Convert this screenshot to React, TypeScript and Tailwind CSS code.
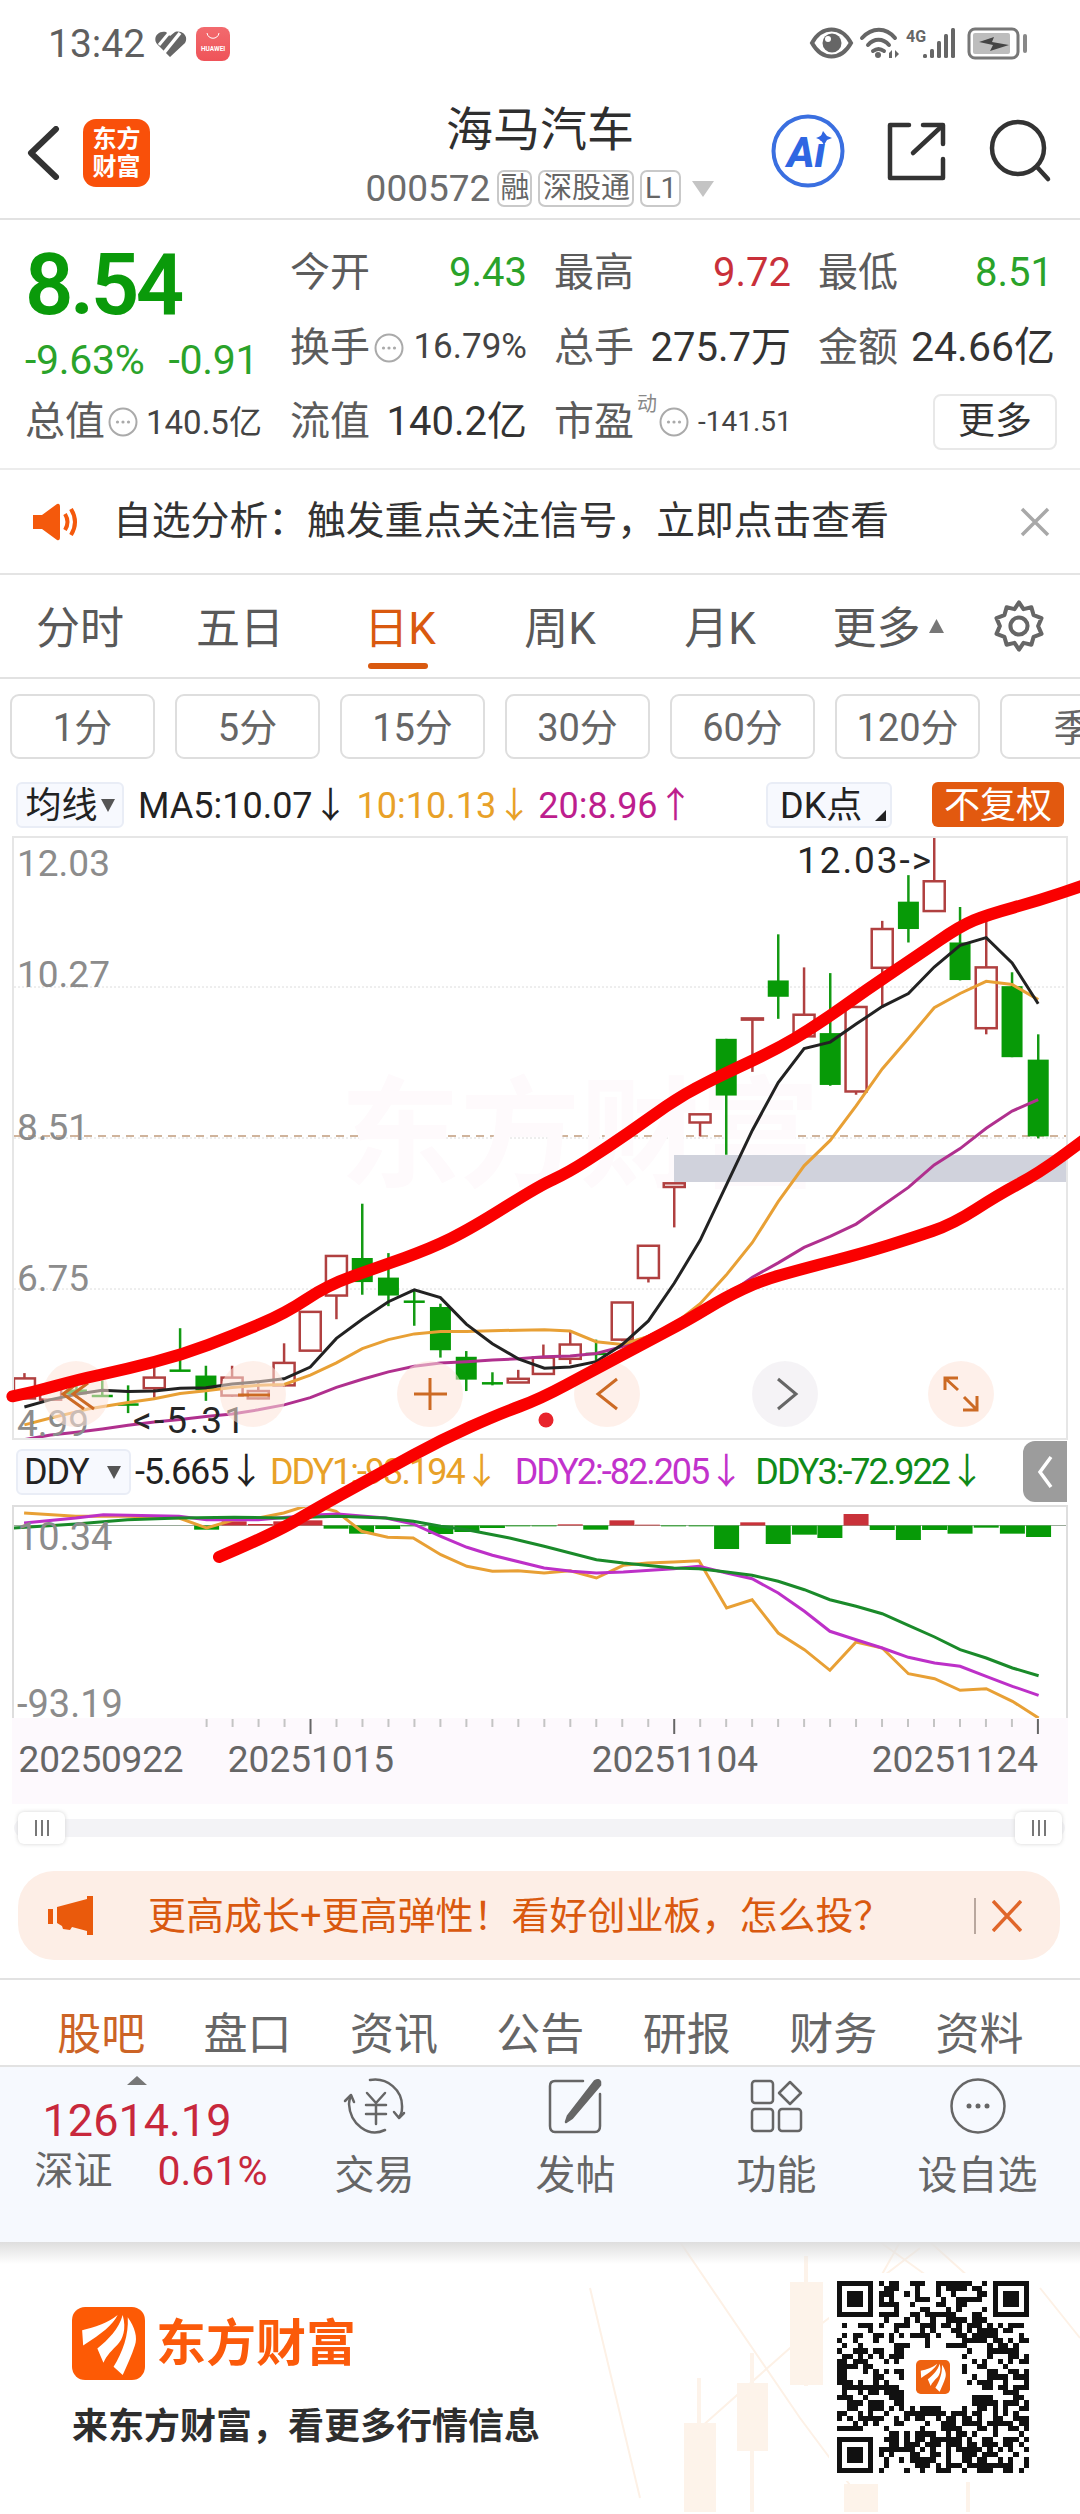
import React from "react";

type P = [number, number];
const z3 = (x: number, y: number): P => [x / 2.904, 820 + y / 2.45];
const z5 = (x: number, y: number): P => [x / 1.452, 1440 + y / 3];
const line = (p: P[]) => p.map((q) => `${q[0].toFixed(1)},${q[1].toFixed(1)}`).join(" ");
const smooth = (p: P[]) => {
  let d = `M${p[0][0].toFixed(1)} ${p[0][1].toFixed(1)}`;
  for (let i = 1; i < p.length - 1; i++) {
    const mx = (p[i][0] + p[i + 1][0]) / 2;
    const my = (p[i][1] + p[i + 1][1]) / 2;
    d += ` Q${p[i][0].toFixed(1)} ${p[i][1].toFixed(1)} ${mx.toFixed(1)} ${my.toFixed(1)}`;
  }
  const l = p[p.length - 1];
  return d + ` L${l[0].toFixed(1)} ${l[1].toFixed(1)}`;
};
const O = 1568;
// x, bodyTop, bodyBottom, wickTop, wickBottom, colour
const candles: [number, number, number, number, number, "r" | "g"][] = [
  [71, 1373, 1422, 1360, 1422, "r"], [147, 1395, 1425, 1385, 1428, "r"], [222, 1400, 1412, 1390, 1420, "g"],
  [297, 1413, 1416, 1378, 1416, "g"], [372, 1434, 1437, 1390, 1458, "g"], [448, 1371, 1397, 1345, 1420, "r"],
  [523, 1351, 1353, 1250, 1353, "g"], [598, 1366, 1402, 1342, 1428, "g"], [674, 1371, 1415, 1342, 1418, "r"],
  [750, 1404, 1422, 1385, 1424, "r"], [825, 1335, 1390, 1287, 1394, "r"], [901, 1210, 1305, 1210, 1305, "r"],
  [977, 1073, 1170, 1073, 1228, "r"], [1052, 1078, 1137, 945, 1168, "g"], [1128, 1126, 1170, 1066, 1196, "g"],
  [1203, 1182, 1185, 1155, 1244, "g"], [1279, 1198, 1304, 1190, 1322, "g"], [1354, 1320, 1376, 1306, 1404, "g"],
  [1430, 1382, 1385, 1358, 1390, "g"], [1505, 1374, 1383, 1352, 1383, "r"], [O + 10, 1322, 1362, 1290, 1362, "r"],
  [O + 88, 1290, 1325, 1255, 1338, "r"], [O + 163, 1310, 1312, 1278, 1330, "g"], [O + 239, 1187, 1278, 1187, 1282, "r"],
  [O + 315, 1048, 1127, 1048, 1138, "r"], [O + 390, 895, 904, 895, 1003, "r"], [O + 465, 726, 746, 726, 780, "r"],
  [O + 541, 541, 680, 541, 825, "g"], [O + 617, 491, 494, 491, 622, "r"], [O + 692, 398, 438, 285, 492, "g"],
  [O + 767, 482, 535, 366, 535, "r"], [O + 843, 527, 654, 380, 656, "g"], [O + 918, 463, 670, 463, 678, "r"],
  [O + 994, 272, 367, 252, 465, "r"], [O + 1070, 205, 272, 140, 305, "g"], [O + 1145, 155, 228, 45, 228, "r"],
  [O + 1220, 305, 397, 218, 398, "g"], [O + 1296, 366, 515, 240, 530, "r"], [O + 1371, 412, 586, 378, 586, "g"],
  [O + 1447, 592, 780, 530, 785, "g"],
];
const raw = (a: number[]) => {
  const out: P[] = [];
  for (let i = 0; i < a.length; i += 2) out.push(z3(a[i], a[i + 1]));
  return out;
};
const ma5 = raw([71,1443,147,1425,222,1412,297,1402,372,1405,448,1404,523,1397,598,1396,674,1387,750,1381,825,1374,901,1345,977,1275,1052,1228,1128,1185,1203,1156,1279,1175,1354,1240,1430,1288,1505,1325,1581,1348,O+88,1345,O+163,1332,O+239,1290,O+315,1232,O+390,1140,O+465,1035,O+541,900,O+617,765,O+692,648,O+767,565,O+843,549,O+918,505,O+994,462,O+1070,430,O+1145,365,O+1220,312,O+1296,293,O+1371,355,O+1447,455]);
const ma10 = raw([71,1487,147,1470,222,1455,255,1448,372,1432,448,1423,523,1410,598,1403,674,1395,750,1390,825,1388,901,1365,977,1335,1052,1300,1128,1278,1203,1264,1279,1258,1354,1258,1430,1256,1505,1255,1581,1254,O+88,1257,O+163,1283,O+239,1290,O+315,1270,O+390,1240,O+465,1190,O+541,1120,O+617,1040,O+692,940,O+767,852,O+843,790,O+918,705,O+994,615,O+1070,540,O+1145,465,O+1220,430,O+1296,400,O+1371,408,O+1447,445]);
const ma20 = raw([71,1523,147,1512,222,1505,297,1497,372,1488,448,1480,523,1474,598,1466,674,1460,750,1450,825,1438,901,1420,977,1395,1052,1375,1128,1357,1203,1343,1279,1335,1354,1332,1430,1328,1505,1325,1581,1320,O+88,1318,O+163,1312,O+239,1295,O+315,1270,O+390,1240,O+465,1205,O+541,1170,O+617,1125,O+692,1090,O+767,1052,O+843,1025,O+918,995,O+994,950,O+1070,905,O+1145,850,O+1220,810,O+1296,760,O+1371,718,O+1447,690]);
const red1 = raw([36,1412,100,1402,220,1372,370,1345,530,1310,680,1262,830,1208,950,1140,1100,1095,1250,1050,1370,1000,O,895,O+80,865,O+200,800,O+310,735,O+420,670,O+540,620,O+680,565,O+800,505,O+950,415,O+1100,330,O+1220,260,O+1300,232,O+1450,197,O+1580,160]);
const red2: P[] = [[219,1557],[275,1533],[317,1508],[386,1470],[441,1440],[499,1414],[540,1399],[592,1371],[643,1344],[688,1320],[726,1297],[760,1281],[802,1269],[864,1253],[912,1238],[953,1224],[998,1195],[1039,1173],[1084,1140]];

const zz = (a: number[]) => {
  const out: P[] = [];
  for (let i = 0; i < a.length; i += 2) out.push(z5(a[i], a[i + 1]));
  return out;
};
const ddy1 = zz([35,225,110,235,185,235,260,240,300,270,340,245,375,240,412,225,450,200,488,220,525,280,563,298,600,300,640,350,678,385,715,400,752,398,790,405,828,398,866,420,905,382,940,375,978,372,1015,368,1055,510,1092,485,1130,585,1168,635,1205,697,1243,612,1281,630,1319,707,1357,722,1394,757,1432,752,1470,790,1508,840]);
const ddy2 = zz([35,255,110,240,150,230,260,235,300,245,375,245,450,232,490,228,560,240,600,258,640,295,678,328,715,352,790,390,830,400,866,405,905,402,978,392,1015,385,1055,405,1092,422,1130,465,1168,520,1205,580,1243,605,1281,630,1319,658,1357,675,1394,685,1432,715,1470,745,1508,772]);
const ddy3 = zz([20,270,110,258,185,245,260,240,340,238,412,240,490,235,560,240,600,250,640,265,678,275,740,300,790,325,866,365,905,375,978,390,1015,392,1055,402,1092,412,1130,430,1168,455,1205,485,1243,505,1281,527,1319,562,1357,597,1394,635,1432,660,1470,690,1508,713]);
const bars: [number, number][] = [[300,275],[340,250],[378,258],[415,250],[450,247],[488,272],[525,287],[563,273],[600,265],[640,288],[678,282],[715,270],[752,265],[790,265],[828,259],[865,275],[903,247],[940,260],[978,265],[1018,265],[1055,333],[1093,253],[1130,318],[1168,290],[1205,300],[1243,228],[1281,276],[1319,306],[1357,276],[1394,287],[1432,269],[1470,287],[1508,297]];

const qrPath = (() => {
  const n = 37;
  let seed = 20251124;
  const rnd = () => {
    seed = (seed * 1664525 + 1013904223) >>> 0;
    return (seed >>> 16) / 65536;
  };
  let d = "";
  const inFinder = (x: number, y: number) => (x < 8 && y < 8) || (x >= n - 8 && y < 8) || (x < 8 && y >= n - 8);
  const finder = (ox: number, oy: number) => {
    d += `M${ox} ${oy}h7v1h-7zM${ox} ${oy + 6}h7v1h-7zM${ox} ${oy + 1}h1v5h-1zM${ox + 6} ${oy + 1}h1v5h-1zM${ox + 2} ${oy + 2}h3v3h-3z`;
  };
  finder(0, 0);
  finder(n - 7, 0);
  finder(0, n - 7);
  for (let y = 0; y < n; y++)
    for (let x = 0; x < n; x++) {
      if (inFinder(x, y)) continue;
      if (x >= 13 && x <= 23 && y >= 13 && y <= 23) continue;
      if (rnd() > 0.48) d += `M${x} ${y}h1v1h-1z`;
    }
  return d;
})();

const Feather = ({ fill = "#fff" }: { fill?: string }) => (
  <g fill={fill}>
    <path d="M10 23 C22 20 36 16 45 8 C40 18 30 26 11 38 Z" />
    <path d="M25 41 C36 32 46 22 50 8 C54 22 50 32 45 37 C40 42 34 48 31 55 Z" />
    <path d="M41 59 C50 44 56 28 55 10 C62 20 65 30 62 38 C59 48 54 58 50 67 Z" />
  </g>
);

const Dots = () => (
  <svg width="30" height="30" viewBox="0 0 30 30" className="shrink-0">
    <circle cx="15" cy="15" r="13.5" fill="none" stroke="#aaa" strokeWidth="2" />
    <circle cx="9.5" cy="15" r="1.6" fill="#aaa" />
    <circle cx="15" cy="15" r="1.6" fill="#aaa" />
    <circle cx="20.5" cy="15" r="1.6" fill="#aaa" />
  </svg>
);

const Label = ({ c }: { c: string }) => <span className="shrink-0 whitespace-nowrap text-[40px] leading-none text-[#5c5c5c]">{c}</span>;

const Tag = ({ c, w }: { c: string; w: string }) => (
  <span className={`flex h-[37px] items-center justify-center rounded-[7px] border-2 border-[#c9c9c9] text-[29px] leading-none text-[#666] ${w}`}>{c}</span>
);

function Status() {
  return (
    <div className="flex h-[88px] items-center pl-[48px] pr-[49px]">
      <span className="text-[39px] leading-none text-[#5f5f5f]">13:42</span>
      <svg width="34" height="30" viewBox="155 28 34 30" className="ml-[9px]">
        <path d="M171 56 L158 43 C153 36 160 29 167 31 L171 35 L176 31 C183 29 190 35 186 42 Z" fill="#666" />
        <path d="M181 32 L164 53" stroke="#fff" strokeWidth="3.5" />
        <path d="M170 32 L160 44" stroke="#fff" strokeWidth="3" />
      </svg>
      <span className="relative ml-[8px] flex h-[34px] w-[34px] flex-col items-center justify-end rounded-[8px] bg-gradient-to-b from-[#f26a6e] to-[#ef5359] pb-[9px]">
        <svg width="14" height="7" viewBox="0 0 14 7" className="absolute top-[6px]" fill="none" stroke="#fff" strokeWidth="1">
          <path d="M1 0 C2 7 12 7 13 0" />
        </svg>
        <span className="text-[6.5px] font-bold leading-none text-white">HUAWEI</span>
      </span>
      <svg width="225" height="40" viewBox="810 23 225 40" className="ml-auto">
        <path d="M816 42 C826 24 845 24 855 42 C845 60 826 60 816 42 Z" fill="none" stroke="#666" strokeWidth="4" />
        <circle cx="836" cy="42" r="9.5" fill="#666" />
        <circle cx="832" cy="38" r="3" fill="#fff" />
        <g fill="none" stroke="#666" strokeWidth="4" strokeLinecap="round">
          <path d="M866 37 C876 26 890 26 899 37" />
          <path d="M872 44 C878 37 887 37 893 44" />
          <path d="M877 50 C881 47 884 47 888 50" />
        </g>
        <circle cx="882" cy="54" r="3" fill="#666" />
        <path d="M893 52 L896 49 V57 H893 Z M899 49 L903 53 L899 57 Z" fill="#666" />
        <text x="910" y="41" fontSize="16" fontWeight="700" fill="#666" className="font-[Roboto,sans-serif]">4G</text>
        <rect x="927" y="53" width="4" height="4" rx="1.5" fill="#666" />
        <rect x="934" y="48" width="4" height="9" rx="1.5" fill="#666" />
        <rect x="941" y="40" width="4" height="17" rx="1.5" fill="#666" />
        <rect x="948" y="33" width="4" height="24" rx="1.5" fill="#666" />
        <rect x="955" y="27" width="4" height="30" rx="1.5" fill="#666" />
        <rect x="973" y="28" width="49" height="29" rx="6" fill="none" stroke="#777" strokeWidth="3" />
        <rect x="977" y="32" width="37" height="21" rx="2" fill="#bdbdbd" />
        <path d="M983 41 L998 36 L996 41 L1013 44 L994 50 L997 44 Z" fill="#444" />
        <rect x="1027" y="33" width="4" height="19" rx="2" fill="#888" />
      </svg>
    </div>
  );
}

function Header() {
  return (
    <div className="flex h-[132px] items-center border-b-2 border-[#e2e2e2]">
      <div className="flex w-[270px] items-center pl-[27px]">
        <svg width="33" height="54" viewBox="0 0 33 54" fill="none" stroke="#333" strokeWidth="6" strokeLinecap="round" strokeLinejoin="round">
          <path d="M29 3 L4 27 L29 51" />
        </svg>
        <span className="ml-[23px] flex h-[68px] w-[67px] flex-col items-center justify-center rounded-[13px] bg-[#f9500a] text-[24px] font-bold leading-[28px] text-white">
          <span>东方</span>
          <span>财富</span>
        </span>
      </div>
      <div className="flex flex-1 flex-col items-center pt-[3px]">
        <span className="text-[47px] leading-[56px] text-[#2f2f2f]">海马汽车</span>
        <div className="mt-[12px] flex items-center gap-[6px]">
          <span className="mr-[1px] text-[37px] leading-none text-[#6c6c6c]">000572</span>
          <Tag c="融" w="w-[35px]" />
          <Tag c="深股通" w="w-[96px]" />
          <Tag c="L1" w="w-[41px]" />
          <svg width="22" height="16" viewBox="0 0 22 16" className="ml-[5px]"><path d="M0 0 H22 L11 16 Z" fill="#c4c4c4" /></svg>
        </div>
      </div>
      <div className="w-[270px]">
        <svg width="290" height="76" viewBox="770 114 290 76" className="-ml-[40px] mb-[4px] block">
          <circle cx="808" cy="152" r="34.5" fill="none" stroke="#3a6fe0" strokeWidth="4" />
          <text x="787" y="168" fontSize="42" fontWeight="800" fontStyle="italic" fill="#2f66e2">Ai</text>
          <path d="M823 132 L827 137 L832 139 L827 141 L824 146 L821 141 L816 139 L821 137 Z" fill="#2f66e2" />
          <g fill="none" stroke="#333" strokeWidth="4.5" strokeLinecap="round" strokeLinejoin="round">
            <path d="M909 126 H890 V179 H943 V160" />
            <path d="M923 126 H943 V145" />
            <path d="M913 154 L942 127" />
            <circle cx="1018" cy="149" r="26" />
            <path d="M1037 168 L1048 180" />
          </g>
        </svg>
      </div>
    </div>
  );
}

function Cell({ children }: { children: React.ReactNode }) {
  return <div className="flex items-center justify-between">{children}</div>;
}

function Stats() {
  return (
    <div className="flex h-[250px] border-b-2 border-[#ececec]">
      <div className="flex w-[290px] flex-col pl-[25px]">
        <span className="mt-[26px] h-[78px] text-[85px] font-semibold leading-[78px] tracking-[-3.5px] text-[#0a9a0a]">8.54</span>
        <div className="mt-[16px] flex gap-[24px] text-[41px] leading-[40px] tracking-[-0.3px] text-[#2aa32a]">
          <span>-9.63%</span>
          <span>-0.91</span>
        </div>
        <div className="mt-[22px] flex items-center">
          <Label c="总值" />
          <span className="ml-[3px]"><Dots /></span>
          <span className="ml-[8px] text-[33px] leading-none text-[#444]">140.5亿</span>
        </div>
      </div>
      <div className="grid w-[763px] grid-cols-[237px_237px_235px] grid-rows-[74px_75px_74px] gap-x-[27px] pt-[16px]">
        <Cell><Label c="今开" /><span className="text-[40px] text-[#2aa32a]">9.43</span></Cell>
        <Cell><Label c="最高" /><span className="text-[40px] text-[#c9303a]">9.72</span></Cell>
        <Cell><Label c="最低" /><span className="text-[40px] text-[#2aa32a]">8.51</span></Cell>
        <Cell>
          <span className="flex items-center"><Label c="换手" /><span className="ml-[4px]"><Dots /></span></span>
          <span className="text-[35px] text-[#444]">16.79%</span>
        </Cell>
        <Cell><Label c="总手" /><span className="text-[40px] text-[#333]">275.7万</span></Cell>
        <Cell><Label c="金额" /><span className="-mr-[2px] text-[41px] text-[#333]">24.66亿</span></Cell>
        <Cell><Label c="流值" /><span className="text-[40px] text-[#333]">140.2亿</span></Cell>
        <div className="flex items-center">
          <Label c="市盈" />
          <span className="relative -top-[18px] ml-[3px] shrink-0 text-[20px] leading-none text-[#888]">动</span>
          <span className="ml-[2px]"><Dots /></span>
          <span className="ml-[9px] whitespace-nowrap text-[28px] leading-none text-[#444]">-141.51</span>
        </div>
        <div className="-mr-[4px] flex items-center justify-end">
          <span className="flex h-[56px] w-[124px] items-center justify-center rounded-[8px] border-2 border-[#e8e8e8] text-[37px] text-[#333]">更多</span>
        </div>
      </div>
    </div>
  );
}

function Notice() {
  return (
    <div className="flex h-[105px] items-center border-b-2 border-[#e4e4e4] pl-[33px] pr-[30px]">
      <svg width="46" height="38" viewBox="0 0 46 38">
        <path d="M0 12 H9 L24 1 Q27 0 27 4 V34 Q27 38 24 37 L9 26 H0 Z" fill="#f4590c" />
        <path d="M32 11 Q37 19 32 27 M38 6 Q46 19 38 32" fill="none" stroke="#f4590c" strokeWidth="4" />
      </svg>
      <span className="ml-[34px] text-[38.8px] leading-none text-[#333]">{"自选分析\uFF1A触发重点关注信号\uFF0C立即点击查看"}</span>
      <svg width="30" height="30" viewBox="0 0 30 30" className="ml-auto" fill="none" stroke="#a8a8a8" strokeWidth="3.5">
        <path d="M2 2 L28 28 M28 2 L2 28" />
      </svg>
    </div>
  );
}

function Tabs() {
  const t = ["分时", "五日", "日K", "周K", "月K"];
  return (
    <div className="flex h-[104px] items-center border-b-2 border-[#e2e2e2]">
      {t.map((s) => (
        <span key={s} className={`relative flex h-full w-[160px] items-center justify-center pt-[5px] text-[44px] leading-none ${s === "日K" ? "text-[#d9590f]" : "text-[#595959]"}`}>
          {s}
          {s === "日K" && <span className="absolute bottom-[8px] left-[48px] h-[6px] w-[60px] rounded-full bg-[#d9590f]" />}
        </span>
      ))}
      <span className="flex w-[160px] items-center justify-center pl-[16px] pt-[5px] text-[44px] leading-none text-[#595959]">
        更多
        <svg width="15" height="14" viewBox="0 0 15 14" className="ml-[8px] mb-[6px]"><path d="M7.5 0 L15 14 H0 Z" fill="#777" /></svg>
      </span>
      <svg width="54" height="54" viewBox="0 0 24 24" className="ml-[32px]" fill="none" stroke="#666" strokeWidth="1.8" strokeLinejoin="round">
        <path d="M12 1.5 L14 4.5 L17.5 3.7 L18.5 7.2 L22 8.5 L20.5 12 L22 15.5 L18.5 16.8 L17.5 20.3 L14 19.5 L12 22.5 L10 19.5 L6.5 20.3 L5.5 16.8 L2 15.5 L3.5 12 L2 8.5 L5.5 7.2 L6.5 3.7 L10 4.5 Z" />
        <circle cx="12" cy="12" r="3.8" />
      </svg>
    </div>
  );
}

function Intervals() {
  const t = ["1分", "5分", "15分", "30分", "60分", "120分", "季"];
  return (
    <div className="mt-[15px] flex gap-[20px] overflow-hidden pl-[10px]">
      {t.map((s) => (
        <span key={s} className="flex h-[65px] w-[145px] shrink-0 items-center justify-center rounded-[9px] border-2 border-[#dedede] pt-[3px] text-[38px] leading-none text-[#666]">{s}</span>
      ))}
    </div>
  );
}

function Legend() {
  return (
    <div className="mt-[22px] flex h-[47px] items-center pl-[16px] text-[36px] leading-none">
      <span className="flex h-[46px] w-[108px] items-center justify-center gap-[3px] rounded-[6px] border-2 border-[#e9edf6] bg-[#f7f9fe] pt-[2px] text-[#222]">
        均线
        <svg width="14" height="13" viewBox="0 0 14 13"><path d="M0 0 H14 L7 13 Z" fill="#555" /></svg>
      </span>
      <span className="ml-[14px] pt-[3px] text-[#222]">MA5:10.07↓</span>
      <span className="ml-[8px] pt-[3px] text-[#e8a128]">10:10.13↓</span>
      <span className="ml-[6px] pt-[3px] text-[#bd1e8d]">20:8.96↑</span>
      <span className="relative ml-auto flex h-[46px] w-[126px] items-center justify-start rounded-[6px] border-2 border-[#e9edf6] bg-[#f7f9fe] pl-[12px] pt-[2px] text-[#222]">
        DK点
        <svg width="11" height="11" viewBox="0 0 11 11" className="absolute bottom-[5px] right-[4px]"><path d="M11 0 V11 H0 Z" fill="#222" /></svg>
      </span>
      <span className="ml-[40px] mr-[16px] flex h-[45px] w-[132px] items-center justify-center rounded-[6px] bg-[#e2590f] pt-[2px] text-white">不复权</span>
    </div>
  );
}

function MainChart() {
  const grid = [989, 1140, 1291];
  return (
    <div className="relative mx-[12px] mt-[8px] h-[604px] w-[1056px] border-2 border-[#e6e6e6]">
      <svg width="1052" height="600" viewBox="14 840 1052 600" className="block">
        {grid.map((y) => (
          <line key={y} x1="14" x2="1066" y1={y} y2={y} stroke="#dcdcdc" strokeWidth="1" strokeDasharray="2 2" />
        ))}
        <line x1="14" x2="1066" y1="1138" y2="1138" stroke="#d0b49c" strokeWidth="2" strokeDasharray="8 6" />
        <text x="340" y="1180" fontSize="120" fontWeight="700" fill="#fefafc">东方财富</text>
        <rect x="674" y="1157" width="392" height="27" fill="#d0d2dc" />
        {candles.map(([x, t, b, wt, wb, c], i) => {
          const cx = x / 2.904;
          const y = (v: number) => 820 + v / 2.45;
          if (c === "g") {
            return (
              <g key={i}>
                <line x1={cx} x2={cx} y1={y(wt)} y2={y(wb)} stroke="#149a14" strokeWidth="2.5" />
                <rect x={cx - 10.5} y={y(t)} width="21" height={Math.max(2.5, y(b) - y(t))} fill="#079a07" />
              </g>
            );
          }
          return (
            <g key={i}>
              <line x1={cx} x2={cx} y1={y(wt)} y2={y(wb)} stroke="#b04040" strokeWidth="2.5" />
              <rect x={cx - 10.5} y={y(t)} width="21" height={Math.max(1, y(b) - y(t))} fill="#fff" stroke="#b04040" strokeWidth="2.5" />
            </g>
          );
        })}
        <polyline points={line(ma20)} fill="none" stroke="#b0308e" strokeWidth="3" />
        <polyline points={line(ma10)} fill="none" stroke="#e8a035" strokeWidth="3" />
        <polyline points={line(ma5)} fill="none" stroke="#222" strokeWidth="3" />
        <g fontSize="37" fill="#8c8c8c">
          <text x="17" y="878">12.03</text>
          <text x="17" y="989">10.27</text>
          <text x="17" y="1142">8.51</text>
          <text x="17" y="1293">6.75</text>
          <text x="17" y="1438">4.99</text>
        </g>
        <text x="133" y="1435" fontSize="37" fill="#262626" textLength="112">{"<-5.31"}</text>
        <text x="797" y="875" fontSize="37" fill="#262626" textLength="134">{"12.03->"}</text>
        <g fillOpacity="0.55">
          <circle cx="76" cy="1396" r="33" fill="#fde3d8" />
          <circle cx="253" cy="1396" r="33" fill="#fde3d8" />
          <circle cx="430" cy="1396" r="33" fill="#fde3d8" />
          <circle cx="607" cy="1396" r="33" fill="#fde3d8" />
          <circle cx="785" cy="1396" r="33" fill="#ece9ee" />
          <circle cx="961" cy="1396" r="33" fill="#fde3d8" />
        </g>
        <g fill="none" stroke="#cc6a24" strokeWidth="3">
          <path d="M78 1385 L63 1396 L84 1411 M88 1385 L73 1396 L94 1411" />
          <path d="M238 1397 H270" />
          <path d="M414 1396 H447 M430 1380 V1412" />
          <path d="M617 1381 L598 1396 L617 1411" />
          <path d="M945 1392 V1380 H958 M946 1381 L958 1392 M977 1398 V1412 H963 M976 1411 L964 1399" />
        </g>
        <path d="M778 1381 L796 1396 L778 1411" fill="none" stroke="#666" strokeWidth="3" />
        <circle cx="546" cy="1422" r="7.5" fill="#e8232b" />
      </svg>
    </div>
  );
}

function DdyLegend() {
  return (
    <div className="relative mt-[9px] flex h-[46px] items-center pl-[16px] text-[36px] leading-none tracking-[-1.2px]">
      <span className="flex h-[46px] w-[115px] items-center justify-between rounded-[6px] border-2 border-[#e9edf6] bg-[#f7f9fe] pl-[6px] pr-[8px] text-[#222]">
        DDY
        <svg width="14" height="13" viewBox="0 0 14 13"><path d="M0 0 H14 L7 13 Z" fill="#555" /></svg>
      </span>
      <span className="ml-[4px] text-[#222]">-5.665↓</span>
      <span className="ml-[7px] tracking-[-2px] text-[#e8a128]">DDY1:-93.194↓</span>
      <span className="ml-[17px] tracking-[-2px] text-[#c232cc]">DDY2:-82.205↓</span>
      <span className="ml-[13px] tracking-[-2px] text-[#0f8a18]">DDY3:-72.922↓</span>
      <span className="absolute -top-[8px] left-[1023px] flex h-[61px] w-[44px] items-center justify-center rounded-l-[12px] bg-[#9c9c9c]">
        <svg width="17" height="34" viewBox="0 0 17 34" fill="none" stroke="#fff" strokeWidth="3.5"><path d="M14 2 L3 17 L14 32" /></svg>
      </span>
    </div>
  );
}

function DdyChart() {
  return (
    <div className="mx-[12px] mt-[10px] h-[215px] w-[1056px] border-2 border-[#dedede]">
      <svg width="1052" height="211" viewBox="14 1509 1052 211" className="block">
        <line x1="14" x2="1066" y1="1527.5" y2="1527.5" stroke="#9aaa9a" strokeWidth="1" />
        {bars.map(([x, b], i) => {
          const cx = x / 1.452;
          const y = 1440 + b / 3;
          const up = b < 263;
          return (
            <rect key={i} x={cx - 12.5} y={up ? y : 1527.5} width="25" height={Math.abs(y - 1527.5)} fill={up ? "#c9323a" : "#079a07"} />
          );
        })}
        <polyline points={line(ddy1)} fill="none" stroke="#e8a035" strokeWidth="3" />
        <polyline points={line(ddy2)} fill="none" stroke="#bd30c8" strokeWidth="3" />
        <polyline points={line(ddy3)} fill="none" stroke="#1a8a2a" strokeWidth="3" />
        <g fontSize="38" fill="#8c8c8c">
          <text x="17" y="1552">10.34</text>
          <text x="17" y="1719">-93.19</text>
        </g>
      </svg>
    </div>
  );
}

function DateAxis() {
  const ticks = Array.from({ length: 33 }, (_, i) => (300 + i * 37.72) / 1.452);
  return (
    <div className="-mt-[2px] mx-[12px] h-[86px] w-[1056px] bg-[#fdf9fd]">
      <svg width="1056" height="18" viewBox="12 1721 1056 18" className="block">
        {ticks.map((x, i) => {
          const major = i === 4 || i === 18 || i === 32;
          return <line key={i} x1={x} x2={x} y1="1722" y2={major ? 1737 : 1730} stroke={major ? "#666" : "#c4c4c4"} strokeWidth="2" />;
        })}
      </svg>
      <div className="mt-[5px] flex text-[37px] leading-[38px] text-[#666]">
        <span className="ml-[4px] w-[170px] text-center tracking-[-0.2px]">20250922</span>
        <span className="ml-[40px] w-[170px] text-center">20251015</span>
        <span className="ml-[194px] w-[170px] text-center">20251104</span>
        <span className="ml-[110px] w-[170px] text-center">20251124</span>
      </div>
    </div>
  );
}

const Handle = () => (
  <span className="relative flex h-[32px] w-[47px] items-center justify-center gap-[4px] rounded-[6px] bg-white shadow-[0_0_4px_#d4d4d4]">
    <i className="h-[16px] w-[2px] bg-[#777]" />
    <i className="h-[16px] w-[2px] bg-[#777]" />
    <i className="h-[16px] w-[2px] bg-[#777]" />
  </span>
);

function Slider() {
  return (
    <div className="relative mt-[8px] flex justify-between pl-[18px] pr-[18px]">
      <span className="absolute left-[14px] top-[7px] h-[18px] w-[1051px] rounded-[9px] bg-[#f3f3f6]" />
      <Handle />
      <Handle />
    </div>
  );
}

function Banner() {
  return (
    <div className="mx-[18px] mt-[27px] flex h-[89px] w-[1042px] items-center rounded-[36px] bg-[#fdeee6] pl-[30px]">
      <svg width="46" height="40" viewBox="0 0 46 40">
        <rect x="0" y="13" width="5" height="15" fill="#ea5a0c" />
        <path d="M9 11 L39 3 V0 H45 V39 H39 V35 L24 31 L22 34 L15 33 L14 30 L9 27 Z" fill="#ea5a0c" />
      </svg>
      <span className="ml-[54px] text-[38px] leading-none text-[#d9590f]">{"更高成长+更高弹性\uFF01看好创业板\uFF0C怎么投\uFF1F"}</span>
      <span className="ml-[auto] h-[36px] w-[2px] bg-[#b9a79e]" />
      <svg width="30" height="32" viewBox="0 0 30 32" className="ml-[16px] mr-[38px]" fill="none" stroke="#e0662a" strokeWidth="3.5"><path d="M1 1 L29 31 M29 1 L1 31" /></svg>
    </div>
  );
}

function InfoTabs() {
  const t = ["股吧", "盘口", "资讯", "公告", "研报", "财务", "资料"];
  return (
    <div className="mt-[18px] flex h-[89px] items-center border-y-2 border-[#e2e2e2] pl-[28px] pt-[24px]">
      {t.map((s, i) => (
        <span key={s} className={`w-[146.4px] text-center text-[44px] leading-none ${i === 0 ? "text-[#cc6426]" : "text-[#666]"}`}>{s}</span>
      ))}
    </div>
  );
}

function BarItem({ label, children }: { label: string; children: React.ReactNode }) {
  return (
    <div className="flex w-[201px] flex-col items-center pt-[11px]">
      <span className="flex h-[56px] items-center">{children}</span>
      <span className="mt-[22px] text-[40px] leading-none text-[#666]">{label}</span>
    </div>
  );
}

function BottomBar() {
  return (
    <div className="flex h-[175px] bg-[#f6f9fe]">
      <div className="flex w-[274px] flex-col items-center pt-[9px]">
        <svg width="20" height="9" viewBox="0 0 20 9"><path d="M10 0 L20 9 H0 Z" fill="#777" /></svg>
        <span className="mt-[18px] text-[45px] leading-[36px] text-[#c8283c]">12614.19</span>
        <div className="ml-[28px] mt-[12px] flex items-center leading-none">
          <span className="text-[39px] text-[#666]">深证</span>
          <span className="ml-[45px] text-[41px] text-[#c8283c]">0.61%</span>
        </div>
      </div>
      <BarItem label="交易">
        <svg width="64" height="56" viewBox="0 0 64 56" fill="none" stroke="#666" strokeWidth="2.5" strokeLinecap="round" strokeLinejoin="round">
          <path d="M27 2 C44 -1 60 12 59 30 C59 34 58 37 56 39" />
          <path d="M51 34 L56 40 L61 35" />
          <path d="M42 52 C25 60 7 46 6 26 C6 22 7 20 8 18" />
          <path d="M2 23 L8 17 L11 24" />
          <path d="M24 15 L33 25 L42 15 M23 27 H43 M23 36 H43 M33 25 V46" />
        </svg>
      </BarItem>
      <BarItem label="发帖">
        <svg width="58" height="56" viewBox="0 0 58 56" fill="none" stroke="#666" strokeWidth="2.5" strokeLinecap="round" strokeLinejoin="round">
          <path d="M36 3 H8 Q3 3 3 8 V48 Q3 54 8 54 H48 Q53 54 53 48 V16" />
          <path d="M21 38 L48 3 Q52 1 53 4 L53 7 L25 40 L19 44 Z" fill="#666" />
        </svg>
      </BarItem>
      <BarItem label="功能">
        <svg width="54" height="54" viewBox="0 0 54 54" fill="none" stroke="#666" strokeWidth="2.5" strokeLinejoin="round">
          <rect x="2" y="2" width="21" height="22" rx="3" />
          <path d="M40 3 L51 14 L40 25 L29 14 Z" />
          <rect x="2" y="30" width="21" height="22" rx="3" />
          <rect x="29" y="30" width="22" height="22" rx="3" />
        </svg>
      </BarItem>
      <BarItem label="设自选">
        <svg width="56" height="56" viewBox="0 0 56 56">
          <circle cx="28" cy="28" r="26.5" fill="none" stroke="#666" strokeWidth="2.5" />
          <circle cx="19" cy="28" r="2.5" fill="#666" />
          <circle cx="28" cy="28" r="2.5" fill="#666" />
          <circle cx="37" cy="28" r="2.5" fill="#666" />
        </svg>
      </BarItem>
    </div>
  );
}

function Footer() {
  return (
    <div className="relative h-[270px] overflow-hidden bg-white">
      <svg width="1080" height="270" viewBox="0 2244 1080 270" className="absolute left-0 top-0">
        <g stroke="#fdf1e6" strokeWidth="2" fill="none">
          <path d="M680 2244 L800 2420 L870 2514 M590 2290 L640 2500 M700 2430 L790 2350 L920 2250 M1040 2290 L1080 2340 M880 2244 L930 2280 M900 2244 L880 2280 M930 2244 L970 2280" />
        </g>
        <g fill="#fdf3ea">
          <rect x="804" y="2258" width="4" height="130" />
          <rect x="790" y="2284" width="33" height="103" />
          <rect x="750" y="2355" width="4" height="159" />
          <rect x="737" y="2385" width="31" height="68" />
          <rect x="697" y="2380" width="4" height="134" />
          <rect x="684" y="2425" width="32" height="89" />
          <rect x="844" y="2486" width="34" height="28" />
          <rect x="966" y="2484" width="4" height="30" />
        </g>
      </svg>
      <div className="absolute left-0 top-0 h-[22px] w-full bg-gradient-to-b from-[#dedede] to-transparent" />
      <div className="relative flex items-start">
        <div className="ml-[72px] mt-[65px] flex flex-col">
          <div className="flex items-center">
            <svg width="73" height="73" viewBox="0 0 72 72">
              <rect width="72" height="72" rx="13" fill="#fd5a05" />
              <Feather />
            </svg>
            <span className="ml-[11px] text-[50px] font-bold leading-none text-[#fb5a0a]">东方财富</span>
          </div>
          <span className="mt-[29px] text-[36px] font-bold leading-none text-[#2e2e2e]">{"来东方财富\uFF0C看更多行情信息"}</span>
        </div>
        <div className="relative ml-auto mr-[43px] mt-[31px] h-[208px] w-[208px] bg-white p-[8px]">
          <svg width="192" height="192" viewBox="0 0 37 37" shapeRendering="crispEdges" className="block">
            <path d={qrPath} fill="#111" />
          </svg>
          <svg width="34" height="34" viewBox="0 0 72 72" className="absolute left-[87px] top-[87px]">
            <rect width="72" height="72" rx="10" fill="#ee6210" />
            <Feather />
          </svg>
        </div>
      </div>
    </div>
  );
}

export default function App() {
  return (
    <div className="relative h-[2514px] w-[1080px] overflow-hidden bg-white font-[Roboto,'Noto_Sans_CJK_SC',sans-serif]">
      <Status />
      <Header />
      <Stats />
      <Notice />
      <Tabs />
      <Intervals />
      <Legend />
      <MainChart />
      <DdyLegend />
      <DdyChart />
      <DateAxis />
      <Slider />
      <Banner />
      <InfoTabs />
      <BottomBar />
      <Footer />
      <svg width="1080" height="800" viewBox="0 800 1080 800" className="pointer-events-none absolute left-0 top-[800px]">
        <path d={smooth(red1)} fill="none" stroke="#fa0000" strokeWidth="12" strokeLinecap="round" strokeLinejoin="round" />
        <path d={smooth(red2)} fill="none" stroke="#fa0000" strokeWidth="12" strokeLinecap="round" strokeLinejoin="round" />
      </svg>
    </div>
  );
}
